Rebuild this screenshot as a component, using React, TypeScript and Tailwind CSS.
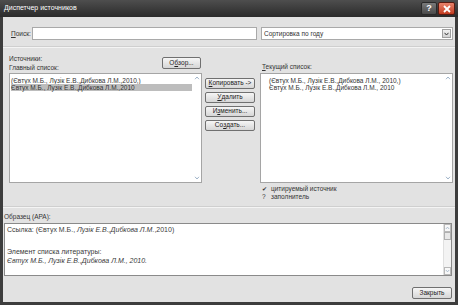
import React from "react";

function Btn({ children, className = "" }: { children: React.ReactNode; className?: string }) {
  return (
    <div
      className={`flex items-center justify-center rounded-[2px] border border-[#707070] bg-linear-to-b from-[#f6f6f6] to-[#d6d6d6] text-[6.5px] leading-none text-[#222] ${className}`}
    >
      {children}
    </div>
  );
}

function Chevron({ up }: { up?: boolean }) {
  return (
    <svg width="6" height="4" viewBox="0 0 6 4">
      <path d={up ? "M1 3.2 L3 1 L5 3.2" : "M1 0.8 L3 3 L5 0.8"} fill="none" stroke="#9fb3c8" strokeWidth="1" />
    </svg>
  );
}

function ListBox({ items, selected, className = "" }: { items: string[]; selected?: number; className?: string }) {
  return (
    <div className={`relative flex h-[110px] w-[193px] border border-[#a5a5a5] bg-white ${className}`}>
      <div className="flex flex-1 flex-col pt-[3px]">
        {items.map((item, i) => (
          <div
            key={i}
            className={`mr-[1px] h-[7px] text-[6.5px] leading-[7px] text-[#333] ${i === selected ? "bg-[#bdbdbd]" : ""}`}
          >
            {item}
          </div>
        ))}
      </div>
      <div className="flex w-[8px] flex-col items-center justify-between py-[2px]">
        <Chevron up />
        <Chevron />
      </div>
    </div>
  );
}

export default function App() {
  return (
    <div className="flex h-[305px] w-[458px] flex-col bg-[#3d3d3d] font-['Liberation_Sans',Arial,sans-serif] text-[#333]">
      {/* title bar */}
      <div className="flex h-[17px] items-center justify-between bg-linear-to-b from-[#4e4e4e] to-[#2b2b2b] pl-[4px] pr-[3px]">
        <span className="text-[7px] text-white">Диспетчер источников</span>
        <div className="flex items-center gap-[1px]">
          <div className="flex h-[13px] w-[16px] items-center justify-center rounded-[2px] border border-[#2a2a2a] bg-linear-to-b from-[#7a7a7a] to-[#4a4a4a] text-[9px] font-bold leading-none text-white">
            ?
          </div>
          <div className="flex h-[13px] w-[17px] items-center justify-center rounded-[2px] border border-[#5a1a10] bg-linear-to-b from-[#e8826a] to-[#c23a1e]">
            <svg width="8" height="8" viewBox="0 0 8 8">
              <path d="M1 1 L7 7 M7 1 L1 7" stroke="white" strokeWidth="1.8" />
            </svg>
          </div>
        </div>
      </div>

      {/* body */}
      <div className="mx-[3px] mb-[3px] flex flex-1 flex-col bg-[#e2e2e2]">
        {/* search row */}
        <div className="mt-[10px] flex h-[13px] items-center pr-[2px]">
          <span className="ml-[8px] w-[21px] text-[6.5px]">
            <span className="underline">П</span>оиск:
          </span>
          <div className="h-[13px] w-[225px] border border-[#a9a9a9] bg-white" />
          <div className="ml-[4px] flex h-[13px] flex-1 items-center border border-[#a9a9a9] bg-white">
            <span className="flex-1 pl-[2px] text-[6.5px]">Сортировка по году</span>
            <div className="mr-[1px] flex h-[9px] w-[9px] items-center justify-center border border-[#a0a0a0] bg-linear-to-b from-[#f2f2f2] to-[#d2d2d2]">
              <svg width="5" height="4" viewBox="0 0 5 4">
                <path d="M0.5 0.8 L2.5 3 L4.5 0.8" fill="none" stroke="#333" strokeWidth="1" />
              </svg>
            </div>
          </div>
        </div>

        <div className="mt-[6px] h-[2px] border-t border-b border-t-[#cfcfcf] border-b-[#f4f4f4]" />

        {/* sources */}
        <div className="mt-[6px] flex pl-[6px]">
          {/* left */}
          <div className="flex w-[193px] flex-col">
            <div className="flex h-[19px] items-start justify-between">
              <div className="flex flex-col text-[6.5px] leading-[9px]">
                <span>Источники:</span>
                <span>Главный список:</span>
              </div>
              <Btn className="mt-[3px] mr-[1px] h-[12px] w-[39px]">
                О<span className="underline">б</span>зор...
              </Btn>
            </div>
            <ListBox
              items={["(Євтух М.Б., Лузік Е.В.,Дибкова Л.М.,2010,)", "Євтух М.Б., Лузік Е.В.,Дибкова Л.М.,2010"]}
              selected={1}
              className="pl-[1px]"
            />
          </div>

          {/* middle buttons */}
          <div className="ml-[3px] mt-[24px] flex w-[50px] flex-col gap-[3px]">
            <Btn className="h-[11px]">
              <span className="underline">К</span>опировать -&gt;
            </Btn>
            <Btn className="h-[11px]">
              <span className="underline">У</span>далить
            </Btn>
            <Btn className="h-[11px]">
              И<span className="underline">з</span>менить...
            </Btn>
            <Btn className="h-[11px]">
              Со<span className="underline">з</span>дать...
            </Btn>
          </div>

          {/* right */}
          <div className="ml-[5px] flex w-[193px] flex-col">
            <div className="flex h-[19px] items-end pb-[2px] pl-[2px] text-[6.5px] leading-[9px]">
              <span>
                <span className="underline">Т</span>екущий список:
              </span>
            </div>
            <ListBox
              items={["(Євтух М.Б., Лузік Е.В.,Дибкова Л.М., 2010,)", "Євтух М.Б., Лузік Е.В.,Дибкова Л.М., 2010"]}
              className="pl-[8px]"
            />
            <div className="mt-[2px] flex flex-col pl-[2px] text-[6.5px] leading-[8px]">
              <div className="flex">
                <span className="w-[9px] text-[6px]">✔</span>
                <span>цитируемый источник</span>
              </div>
              <div className="flex">
                <span className="w-[9px]">?</span>
                <span>заполнитель</span>
              </div>
            </div>
          </div>
        </div>

        <div className="mt-[5px] h-[2px] border-t border-b border-t-[#cfcfcf] border-b-[#f4f4f4]" />

        {/* sample */}
        <div className="mt-[4px] pl-[1px] text-[6.5px] leading-[9px]">Образец (APA):</div>
        <div className="mt-[2px] mr-[3px] ml-[1px] flex h-[53px] border border-[#8a8a8a] bg-white">
          <div className="flex flex-1 flex-col pl-[2px] pt-[2px] text-[7px] leading-[8px] text-[#3a3a3a]">
            <div>
              Ссылка: (Євтух М.Б., <i>Лузік Е.В.,Дибкова Л.М.</i>,2010)
            </div>
            <div className="h-[14px]" />
            <div>Элемент списка литературы:</div>
            <div className="mt-[1px] italic">Євтух М.Б., Лузік Е.В.,Дибкова Л.М., 2010.</div>
          </div>
          <div className="flex w-[8px] flex-col border-l border-[#e0e0e0] bg-[#f3f3f3]">
            <div className="flex h-[8px] items-center justify-center border border-[#b8b8b8] bg-[#f8f8f8]">
              <Chevron up />
            </div>
            <div className="h-[8px] border border-[#b0b0b0] bg-[#e8e8e8]" />
            <div className="flex-1" />
            <div className="flex h-[8px] items-center justify-center border border-[#b8b8b8] bg-[#f8f8f8]">
              <Chevron />
            </div>
          </div>
        </div>

        <div className="mt-auto mb-[3px] mr-[3px] flex justify-end">
          <Btn className="h-[12px] w-[40px]">Закрыть</Btn>
        </div>
      </div>
    </div>
  );
}
